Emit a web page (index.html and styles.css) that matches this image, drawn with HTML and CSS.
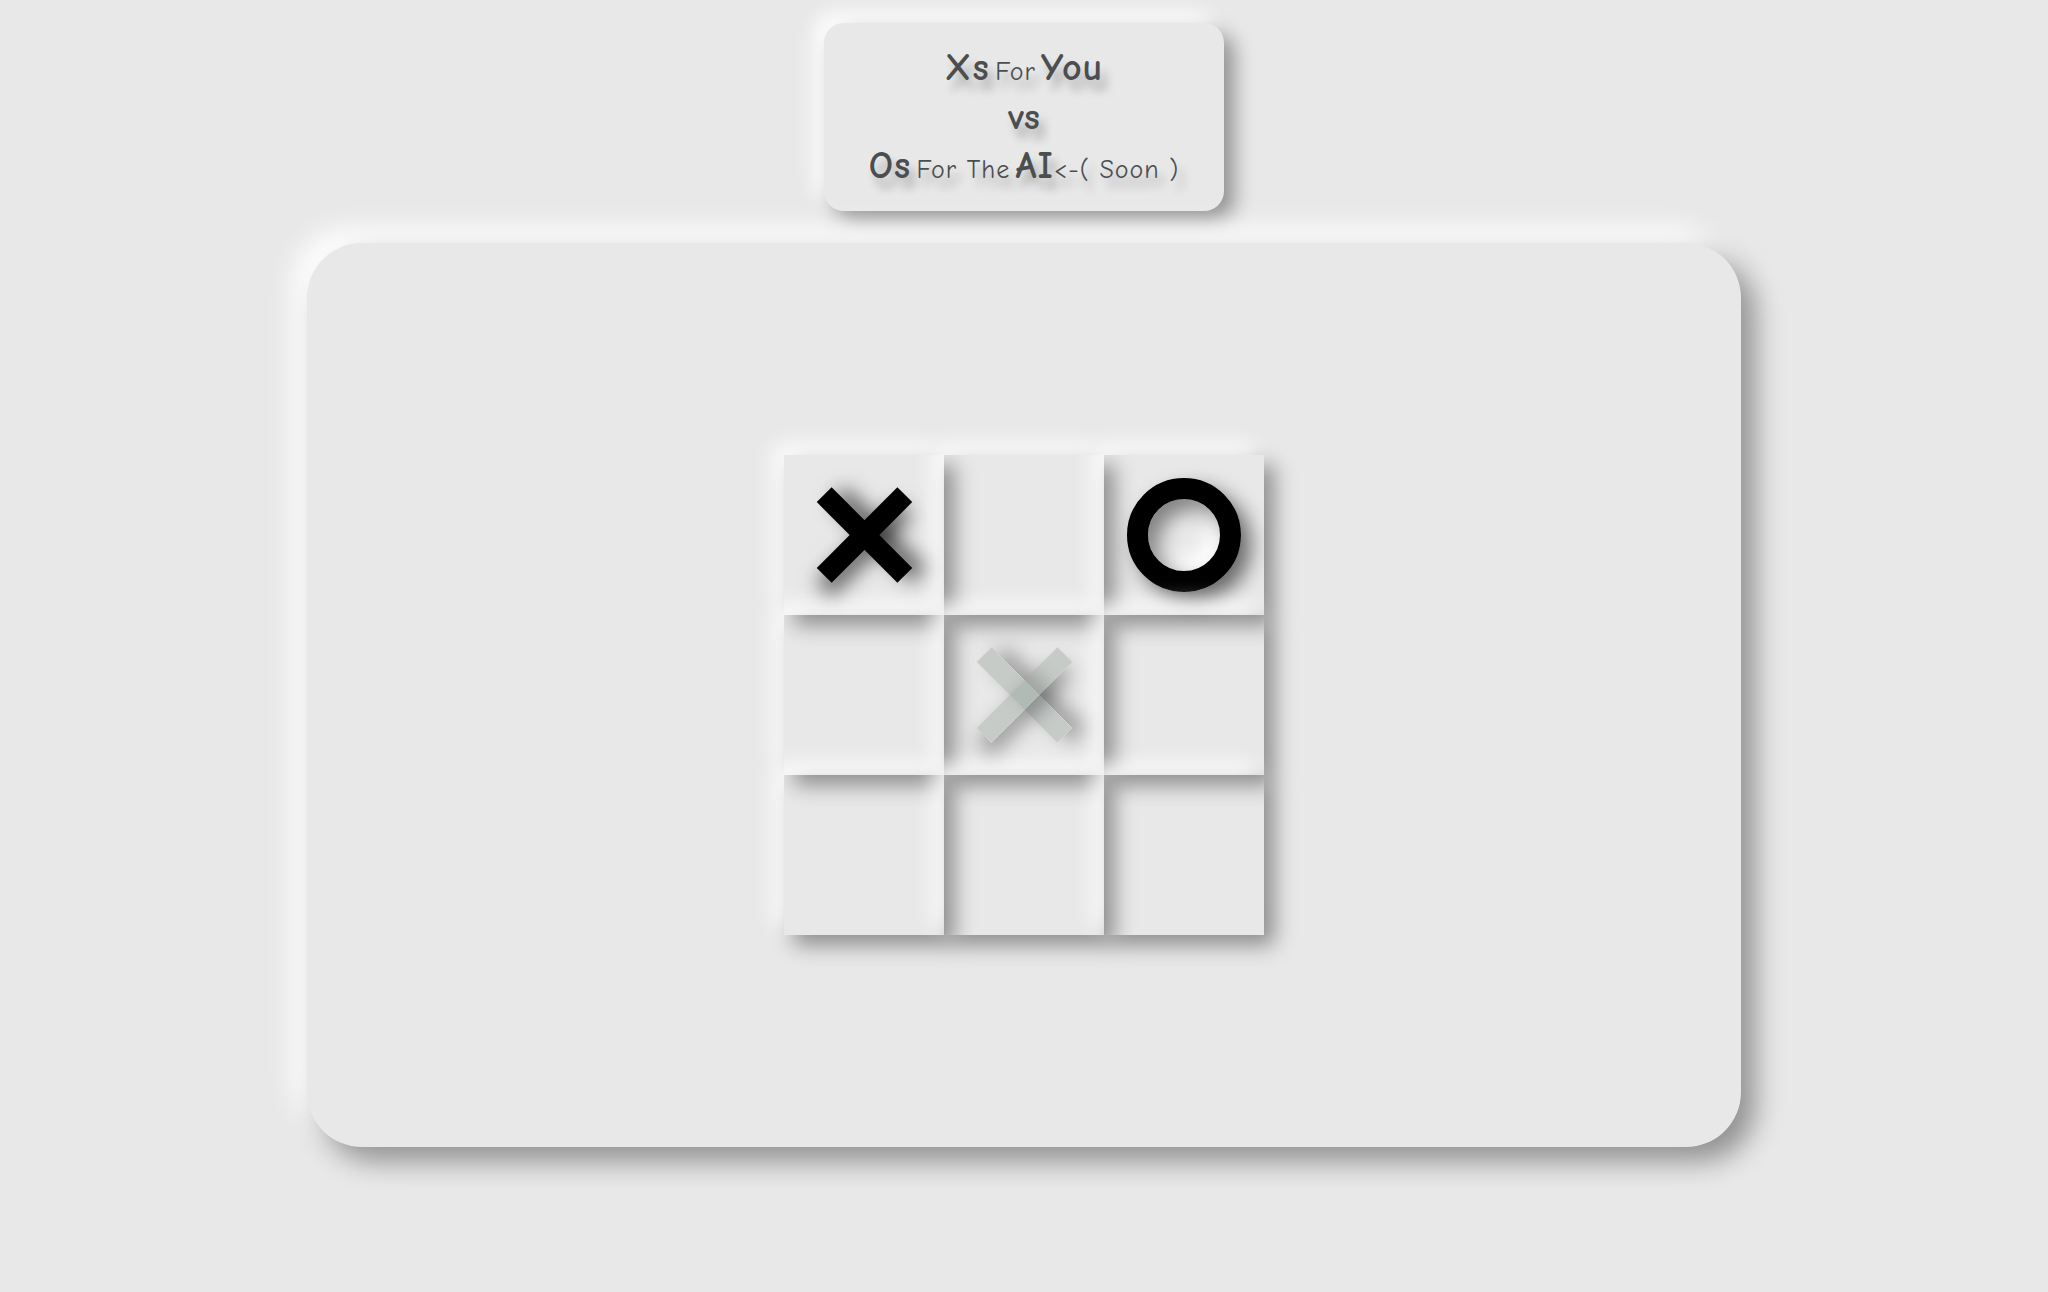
FILE: index.html
```html
<!DOCTYPE html>
<html lang="en">
<head>
<meta charset="utf-8">
<title>Tic Tac Toe</title>
<link rel="stylesheet" href="styles.css">
</head>
<body>
<div class="page">
  <header class="title-card">
    <div class="line"><span class="big">Xs</span> <span class="small">For</span> <span class="big">You</span></div>
    <div class="line"><span class="vs">vs</span></div>
    <div class="line"><span class="big">Os</span> <span class="small">For The</span> <span class="big">AI</span><span class="small">&lt;-( Soon )</span></div>
  </header>
  <main class="board-card">
    <div class="board">
      <div class="cell"><div class="mark-x"></div></div>
      <div class="cell"></div>
      <div class="cell"><div class="mark-o"></div></div>
      <div class="cell"></div>
      <div class="cell"><div class="mark-x ghost"></div></div>
      <div class="cell"></div>
      <div class="cell"></div>
      <div class="cell"></div>
      <div class="cell"></div>
    </div>
  </main>
</div>
</body>
</html>
```
FILE: styles.css
```css
html, body {
  margin: 0;
  padding: 0;
}
body {
  background: #e8e8e8;
  font-family: "Comic Sans MS", "Comic Neue", "Lato", "Open Sans", sans-serif;
  color: #4b4e50;
}
.page {
  display: flex;
  flex-direction: column;
  align-items: center;
  padding-top: 23px;
  min-height: 100vh;
  box-sizing: border-box;
}
.title-card {
  width: 400px;
  height: 188px;
  box-sizing: border-box;
  padding-top: 21px;
  border-radius: 20px;
  background: #e8e8e8;
  box-shadow: 10px 10px 20px rgba(0, 0, 0, 0.38), -10px -10px 20px #ffffff;
  display: flex;
  flex-direction: column;
  align-items: center;
}
.line {
  height: 49px;
  line-height: 49px;
  white-space: nowrap;
  text-shadow: 6px 10px 10px rgba(0, 0, 0, 0.28);
}
.big {
  font-size: 38px;
  font-weight: 700;
  letter-spacing: 1px;
}
.small {
  font-size: 26px;
  font-weight: 400;
  letter-spacing: 1px;
}
.vs {
  font-size: 37px;
  font-weight: 700;
}
.board-card {
  margin-top: 32px;
  width: 70vw;
  height: 70vh;
  flex-shrink: 0;
  border-radius: 55px;
  background: #e8e8e8;
  box-shadow: 14px 14px 28px rgba(0, 0, 0, 0.38), -14px -14px 28px #ffffff;
  display: flex;
  align-items: center;
  justify-content: center;
}
.board {
  display: grid;
  grid-template-columns: repeat(3, 160px);
  grid-template-rows: repeat(3, 160px);
}
.cell {
  display: flex;
  align-items: center;
  justify-content: center;
  box-shadow: 10px 10px 20px rgba(0, 0, 0, 0.4), -10px -10px 20px #ffffff;
}
.mark-x {
  position: relative;
  width: 114px;
  height: 114px;
}
.mark-x::before,
.mark-x::after {
  content: "";
  position: absolute;
  left: 46.5px;
  top: 0;
  width: 21px;
  height: 114px;
  background: #000;
  box-shadow: 10px 10px 20px rgba(0, 0, 0, 0.6);
}
.mark-x::before {
  transform: rotate(-45deg);
}
.mark-x::after {
  transform: rotate(45deg);
}
.mark-x.ghost::before,
.mark-x.ghost::after {
  background: rgba(150, 162, 156, 0.42);
  box-shadow: 10px 10px 20px rgba(0, 0, 0, 0.35);
}
.mark-o {
  width: 72px;
  height: 72px;
  border: 21px solid #000;
  border-radius: 50%;
  box-shadow: 10px 10px 20px rgba(0, 0, 0, 0.55), inset 10px 10px 20px rgba(0, 0, 0, 0.45), inset -10px -10px 20px #ffffff;
}
```
